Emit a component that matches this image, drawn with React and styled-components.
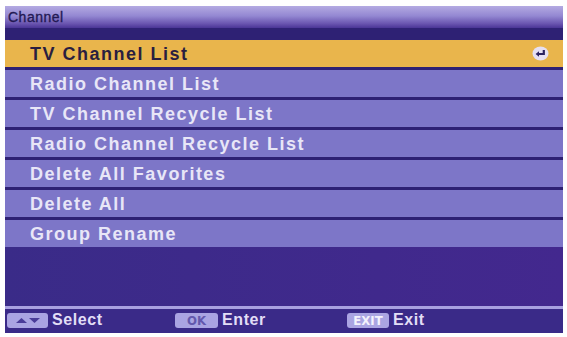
import React from "react";
import styled, { createGlobalStyle } from "styled-components";

const GlobalStyle = createGlobalStyle`
  html, body {
    margin: 0;
    padding: 0;
    background: #ffffff;
  }
  body {
    font-family: "Liberation Sans", Arial, sans-serif;
  }
`;

const items = [
  "TV Channel List",
  "Radio Channel List",
  "TV Channel Recycle List",
  "Radio Channel Recycle List",
  "Delete All Favorites",
  "Delete All",
  "Group Rename",
];

const EnterIcon = () => (
  <svg width="17" height="15" viewBox="0 0 17 15">
    <ellipse cx="8.5" cy="7.5" rx="8" ry="7" fill="#e6e0f2" />
    <path d="M11.8 4 V8 H6" stroke="#2c2260" strokeWidth="2.2" fill="none" />
    <path d="M3.6 8 L7 5.2 L7 10.8 Z" fill="#2c2260" />
  </svg>
);

const ArrowsIcon = () => (
  <svg width="26" height="9" viewBox="0 0 26 9">
    <path d="M1 7 L6.5 2 L12 7 Z" fill="#4a3c98" />
    <path d="M14 2 L25 2 L19.5 7 Z" fill="#4a3c98" />
  </svg>
);

const App = () => {
  return (
    <>
      <GlobalStyle />
      <Screen>
        <TitleBar>Channel</TitleBar>
        <Menu>
          {items.map((label, i) => (
            <Row key={label} active={i === 0}>
              <span>{label}</span>
              {i === 0 && <EnterIcon />}
            </Row>
          ))}
        </Menu>
        <Empty />
        <Footer>
          <Hint>
            <Key width={41}>
              <ArrowsIcon />
            </Key>
            <span>Select</span>
          </Hint>
          <Hint>
            <Key width={43} dark>
              OK
            </Key>
            <span>Enter</span>
          </Hint>
          <Hint>
            <Key width={42}>EXIT</Key>
            <span>Exit</span>
          </Hint>
        </Footer>
      </Screen>
    </>
  );
};

export default App;

const Screen = styled.div`
  margin: 6px 0 0 5px;
  width: 558px;
  height: 327px;
  display: flex;
  flex-direction: column;
  background: #3b2a8a;
  overflow: hidden;
`;

const TitleBar = styled.div`
  height: 22px;
  flex: none;
  display: flex;
  align-items: center;
  padding-left: 3px;
  background: linear-gradient(
    to bottom,
    #b4aae2 0%,
    #9488d2 45%,
    #6a55b0 80%,
    #4a3596 100%
  );
  color: #221852;
  font-size: 14px;
  letter-spacing: 0.5px;
  -webkit-text-stroke: 0.3px #221852;
`;

const Menu = styled.div`
  display: flex;
  flex-direction: column;
  gap: 3px;
  padding-top: 12px;
  background: #2e2174;
  flex: none;
`;

const Row = styled.div`
  height: 27px;
  display: flex;
  align-items: center;
  justify-content: space-between;
  padding: 0 14px 0 25px;
  background: ${(p) => (p.active ? "#e9b54c" : "#7d76c8")};
  color: ${(p) => (p.active ? "#2a1e40" : "#e8e6f7")};
  font-size: 18px;
  font-weight: bold;
  letter-spacing: 1.5px;

  span {
    padding-top: 1px;
  }
`;

const Empty = styled.div`
  flex: 1;
  background: linear-gradient(to right, #3a2b88, #43288e);
  border-bottom: 3px solid #a8a0e0;
`;

const Footer = styled.div`
  height: 22px;
  flex: none;
  display: grid;
  grid-template-columns: 168px 172px auto;
  align-items: center;
  padding-left: 2px;
  padding-bottom: 2px;
  background: #3a2a88;
`;

const Hint = styled.div`
  display: flex;
  align-items: center;
  gap: 4px;
  color: #e2def6;
  font-size: 16px;
  font-weight: bold;
  letter-spacing: 0.6px;
`;

const Key = styled.div`
  width: ${(p) => p.width}px;
  height: 15px;
  border-radius: 3px;
  background: #aaa4e2;
  display: flex;
  align-items: center;
  justify-content: center;
  color: ${(p) => (p.dark ? "#6358ad" : "#f4f2fc")};
  font-family: "DejaVu Sans Condensed", "Liberation Sans Narrow", sans-serif;
  font-size: 13px;
  font-weight: bold;
  letter-spacing: 0;
`;
